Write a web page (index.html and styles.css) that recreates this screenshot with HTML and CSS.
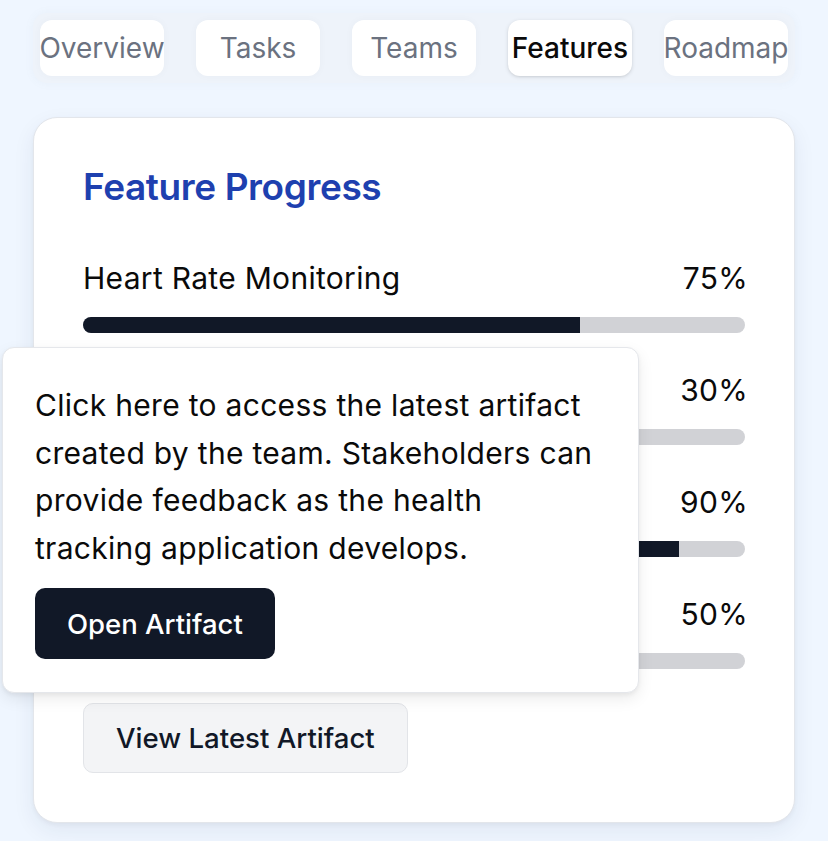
FILE: index.html
```html
<!DOCTYPE html>
<html lang="en">
<head>
<meta charset="utf-8">
<title>Feature Progress</title>
<link rel="stylesheet" href="styles.css">
</head>
<body>
<div class="page">
  <div class="tabs">
    <button class="tab">Overview</button>
    <button class="tab">Tasks</button>
    <button class="tab">Teams</button>
    <button class="tab active">Features</button>
    <button class="tab">Roadmap</button>
  </div>

  <div class="card">
    <h2 class="title">Feature Progress</h2>
    <div class="rows">
      <div class="row">
        <div class="row-head"><span>Heart Rate Monitoring</span><span class="pct">75%</span></div>
        <div class="track"><div class="fill" style="width:75%"></div></div>
      </div>
      <div class="row">
        <div class="row-head"><span>Sleep Analysis</span><span class="pct">30%</span></div>
        <div class="track"><div class="fill" style="width:30%"></div></div>
      </div>
      <div class="row">
        <div class="row-head"><span>Step Counter</span><span class="pct">90%</span></div>
        <div class="track"><div class="fill" style="width:90%"></div></div>
      </div>
      <div class="row">
        <div class="row-head"><span>Nutrition Tracking</span><span class="pct">50%</span></div>
        <div class="track"><div class="fill" style="width:50%"></div></div>
      </div>
    </div>
    <button class="btn-secondary">View Latest Artifact</button>
  </div>

  <div class="popover">
    <p class="popover-text">Click here to access the latest artifact created by the team. Stakeholders can provide feedback as the health tracking application develops.</p>
    <button class="btn-primary">Open Artifact</button>
  </div>
</div>
</body>
</html>
```

FILE: styles.css
```css
* { box-sizing: border-box; }
html, body { margin: 0; padding: 0; }
body {
  background: #eff6ff;
  font-family: Inter, "Noto Sans", sans-serif;
  color: #111827;
  width: 828px;
  height: 841px;
  overflow: hidden;
}
.page {
  position: relative;
  padding: 13px 33px 0 33px;
}
.tabs {
  display: grid;
  grid-template-columns: repeat(5, 124px);
  column-gap: 32px;
  padding: 7px;
  background: #eef3fa;
  border-radius: 14px;
  box-shadow: 0 0 10px rgba(120,130,150,0.06);
}
.tab {
  height: 56px;
  border: none;
  background: #ffffff;
  border-radius: 12px;
  font-family: Inter, "Noto Sans", sans-serif;
  font-size: 28px;
  color: #6b7280;
  padding: 0;
  white-space: nowrap;
  overflow: visible;
  display: flex;
  align-items: center;
  justify-content: center;
  box-shadow: 0 0 8px rgba(0,0,0,0.03);
}
.tab.active {
  color: #0a0a0a;
  font-weight: 500;
  box-shadow: 0 1px 4px rgba(0,0,0,0.12), 0 1px 2px rgba(0,0,0,0.05);
}
.card {
  margin-top: 34px;
  background: #ffffff;
  border: 1px solid #e3e6eb;
  border-radius: 24px;
  padding: 50px 49px 49px 49px;
  height: 706px;
  box-shadow: 0 8px 22px rgba(30,41,80,0.07), 0 2px 4px rgba(0,0,0,0.04);
}
.title {
  margin: 0;
  font-size: 37px;
  line-height: 38px;
  font-weight: 600;
  color: #1e40af;
  letter-spacing: -0.4px;
}
.rows {
  margin-top: 52px;
  display: flex;
  flex-direction: column;
  gap: 37px;
}
.row-head {
  display: flex;
  justify-content: space-between;
  font-size: 30px;
  line-height: 40px;
  letter-spacing: 0.3px;
  color: #0a0a0a;
}
.pct {
  margin-right: -3px;
}
.track {
  margin-top: 19px;
  height: 16px;
  border-radius: 8px;
  background: #d1d2d6;
  overflow: hidden;
}
.fill {
  height: 100%;
  background: #111827;
}
.btn-secondary {
  margin-top: 34px;
  height: 70px;
  padding: 0 32px;
  background: #f3f4f6;
  border: 1px solid #e2e4e8;
  border-radius: 10px;
  font-family: Inter, "Noto Sans", sans-serif;
  font-size: 27.6px;
  font-weight: 500;
  color: #111827;
}
.popover {
  position: absolute;
  left: 2px;
  top: 347px;
  width: 637px;
  height: 346px;
  background: #ffffff;
  border: 1px solid #e5e7eb;
  border-radius: 12px;
  padding: 34px 32px 32px 32px;
  box-shadow: 0 6px 16px rgba(0,0,0,0.08), 0 2px 4px rgba(0,0,0,0.05);
}
.popover-text {
  margin: 0;
  font-size: 30px;
  line-height: 47.5px;
  letter-spacing: 0.3px;
  color: #0a0a0a;
}
.btn-primary {
  margin-top: 16px;
  height: 71px;
  padding: 0 32px;
  background: #111827;
  color: #ffffff;
  border: none;
  border-radius: 10px;
  font-family: Inter, "Noto Sans", sans-serif;
  font-size: 27.5px;
  font-weight: 500;
}
```
